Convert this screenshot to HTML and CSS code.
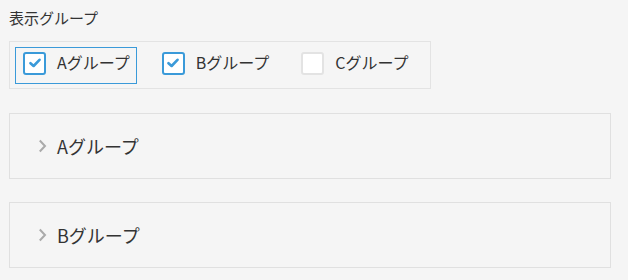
FILE: index.html
```html
<!DOCTYPE html>
<html lang="ja">
<head>
  <meta charset="UTF-8">
  <meta name="viewport" content="width=device-width, initial-scale=1.0">
  <title>表示グループ</title>
  <link rel="stylesheet" href="styles.css">
</head>
<body>
  <div class="container">
    <div class="filter-title">表示グループ</div>

    <!-- 表示グループの選択 -->
    <div class="filter-box">
      <label class="filter-item focused">
        <span class="checkbox checked">
          <svg viewBox="0 0 12 10" width="12" height="10"><path d="M1.5 5.2 L4.6 8 L10.5 1.8" /></svg>
        </span>
        <span class="filter-label">Aグループ</span>
      </label>
      <label class="filter-item">
        <span class="checkbox checked">
          <svg viewBox="0 0 12 10" width="12" height="10"><path d="M1.5 5.2 L4.6 8 L10.5 1.8" /></svg>
        </span>
        <span class="filter-label">Bグループ</span>
      </label>
      <label class="filter-item">
        <span class="checkbox"></span>
        <span class="filter-label">Cグループ</span>
      </label>
    </div>

    <div class="panel">
      <svg class="chevron" viewBox="0 0 9 14" width="9" height="14"><path d="M1.8 1.5 L7 7 L1.8 12.5" /></svg>
      <span class="panel-title">Aグループ</span>
    </div>

    <div class="panel">
      <svg class="chevron" viewBox="0 0 9 14" width="9" height="14"><path d="M1.8 1.5 L7 7 L1.8 12.5" /></svg>
      <span class="panel-title">Bグループ</span>
    </div>
  </div>
</body>
</html>
```

FILE: styles.css
```css
* {
  margin: 0;
  padding: 0;
  box-sizing: border-box;
  font-family: "Noto Sans CJK JP", "Noto Sans", sans-serif;
}

body {
  background-color: #f5f5f5;
  color: #333;
  padding: 8px 17px 0 9px;
}

.container {
  width: 602px;
}

.filter-title {
  font-size: 15px;
  line-height: 20px;
  margin-bottom: 13px;
}

.filter-box {
  display: inline-flex;
  gap: 17px;
  padding: 5px 14px 4px 5px;
  border: 1px solid #e3e3e3;
  margin-bottom: 24px;
}

.filter-item {
  display: flex;
  align-items: center;
  height: 37px;
  padding: 0 6px 5px 7px;
  border: 1px solid transparent;
  cursor: pointer;
}

.filter-item.focused {
  border-color: #3a9ad9;
}

.checkbox {
  display: flex;
  align-items: center;
  justify-content: center;
  width: 23px;
  height: 23px;
  background-color: #fff;
  border: 2px solid #e3e3e3;
  border-radius: 3px;
  margin-right: 11px;
}

.checkbox.checked {
  border-color: #3a9ad9;
}

.checkbox svg path {
  fill: none;
  stroke: #3a9ad9;
  stroke-width: 2.6;
  stroke-linecap: round;
  stroke-linejoin: round;
}

.filter-label {
  font-size: 16px;
  line-height: 20px;
  margin-bottom: 2px;
}

.panel {
  display: flex;
  align-items: center;
  height: 66px;
  padding-left: 28px;
  border: 1px solid #e0e0e0;
  margin-bottom: 23px;
}

.chevron {
  margin-right: 10px;
}

.chevron path {
  fill: none;
  stroke: #aaa;
  stroke-width: 2;
}

.panel-title {
  font-size: 18px;
  line-height: 22px;
}
```
